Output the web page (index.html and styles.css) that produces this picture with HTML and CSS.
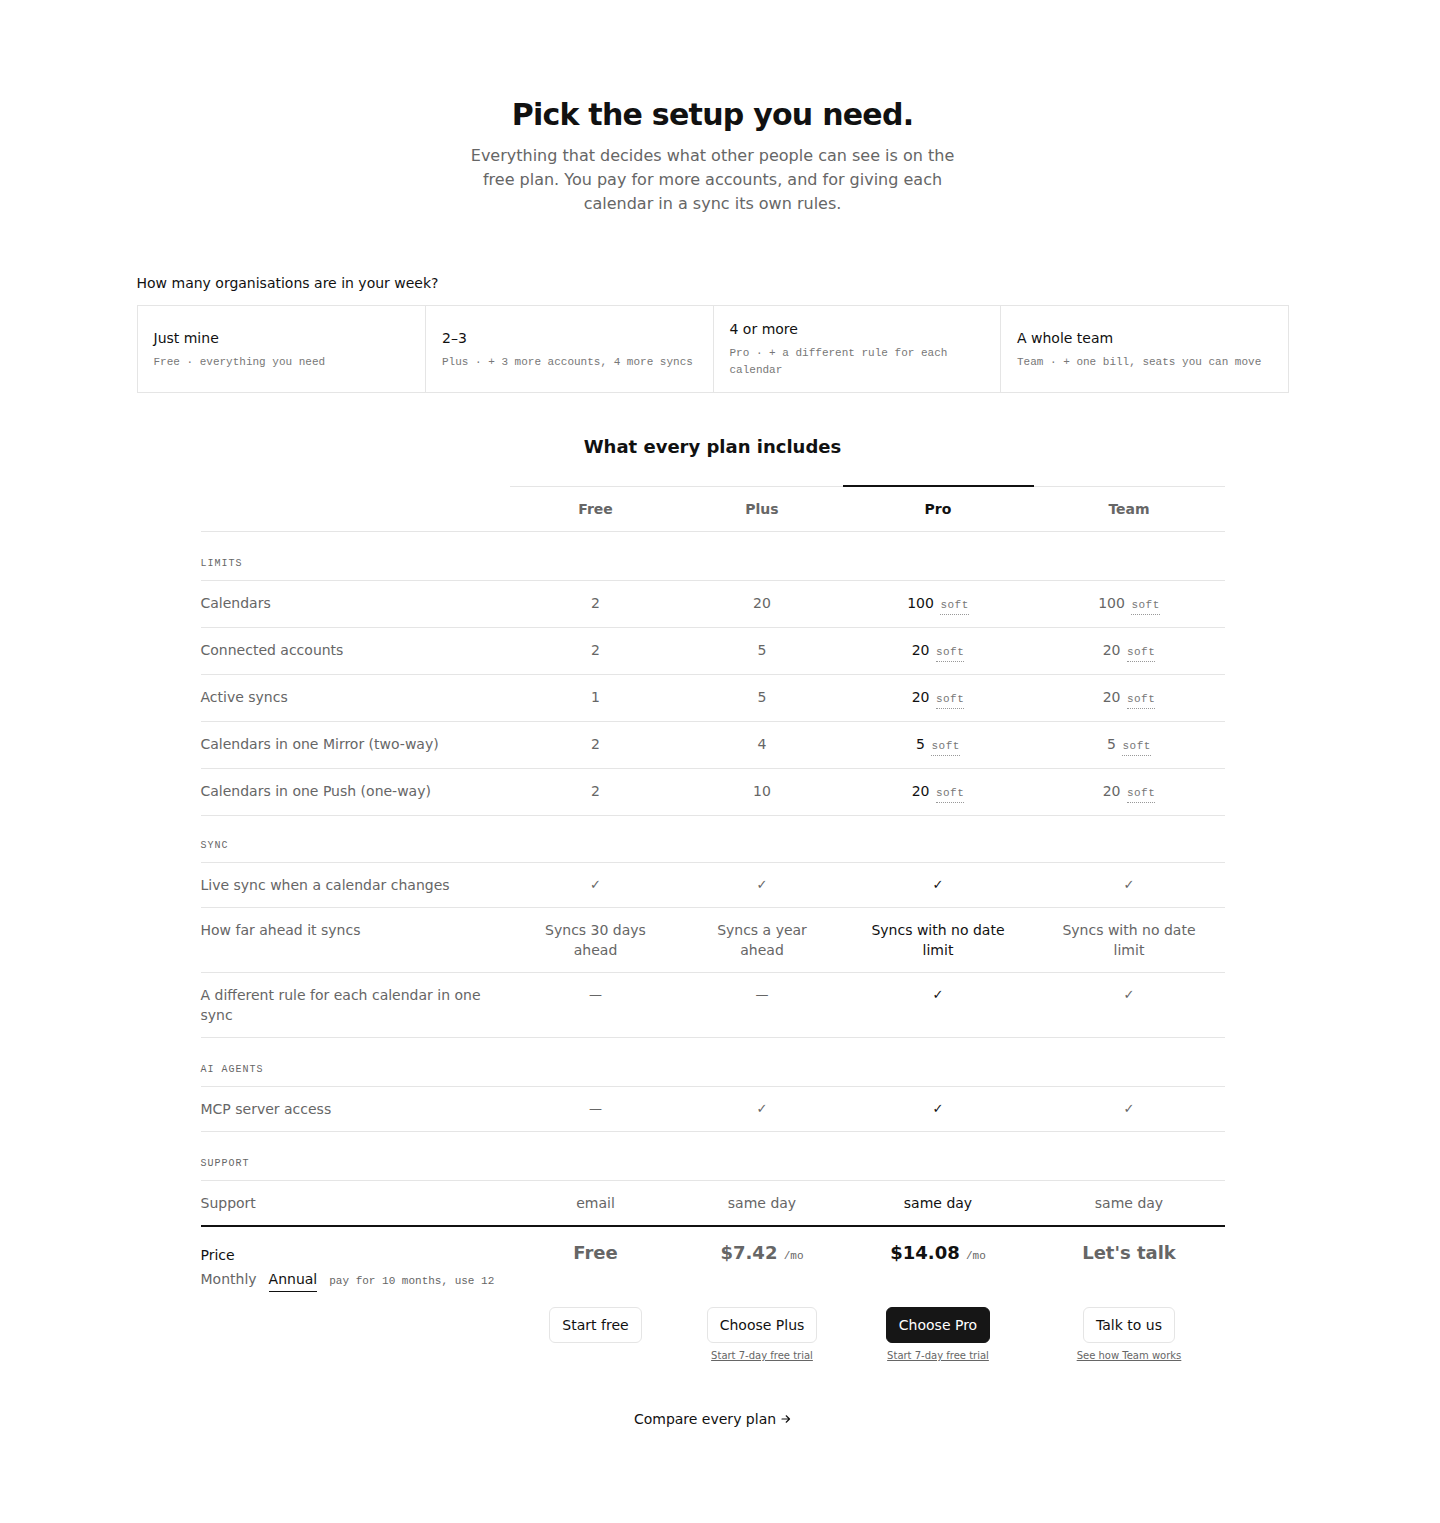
FILE: index.html
```html
<!DOCTYPE html>
<html lang="en">
<head>
<meta charset="utf-8">
<title>Pricing</title>
<link rel="stylesheet" href="styles.css">
</head>
<body>
<main class="page">
  <header class="hero">
    <h1 class="hero-title">Pick the setup you need.</h1>
    <p class="hero-sub">Everything that decides what other people can see is on the free plan. You pay for more accounts, and for giving each calendar in a sync its own rules.</p>
  </header>

  <section class="picker">
    <p class="picker-q">How many organisations are in your week?</p>
    <div class="picker-grid">
      <button class="pick">
        <span class="pick-title">Just mine</span>
        <span class="pick-sub">Free · everything you need</span>
      </button>
      <button class="pick">
        <span class="pick-title">2–3</span>
        <span class="pick-sub">Plus · + 3 more accounts, 4 more syncs</span>
      </button>
      <button class="pick">
        <span class="pick-title">4 or more</span>
        <span class="pick-sub">Pro · + a different rule for each calendar</span>
      </button>
      <button class="pick">
        <span class="pick-title">A whole team</span>
        <span class="pick-sub">Team · + one bill, seats you can move</span>
      </button>
    </div>
  </section>

  <section class="compare">
    <h2 class="compare-title">What every plan includes</h2>
    <div class="table">
      <div class="row head">
        <div class="cell label"></div>
        <div class="cell plan">Free</div>
        <div class="cell plan">Plus</div>
        <div class="cell plan pro">Pro</div>
        <div class="cell plan">Team</div>
      </div>

      <div class="row section"><div class="section-label">Limits</div></div>
      <div class="row">
        <div class="cell label">Calendars</div>
        <div class="cell">2</div>
        <div class="cell">20</div>
        <div class="cell pro">100 <span class="soft">soft</span></div>
        <div class="cell">100 <span class="soft">soft</span></div>
      </div>
      <div class="row">
        <div class="cell label">Connected accounts</div>
        <div class="cell">2</div>
        <div class="cell">5</div>
        <div class="cell pro">20 <span class="soft">soft</span></div>
        <div class="cell">20 <span class="soft">soft</span></div>
      </div>
      <div class="row">
        <div class="cell label">Active syncs</div>
        <div class="cell">1</div>
        <div class="cell">5</div>
        <div class="cell pro">20 <span class="soft">soft</span></div>
        <div class="cell">20 <span class="soft">soft</span></div>
      </div>
      <div class="row">
        <div class="cell label">Calendars in one Mirror (two-way)</div>
        <div class="cell">2</div>
        <div class="cell">4</div>
        <div class="cell pro">5 <span class="soft">soft</span></div>
        <div class="cell">5 <span class="soft">soft</span></div>
      </div>
      <div class="row">
        <div class="cell label">Calendars in one Push (one-way)</div>
        <div class="cell">2</div>
        <div class="cell">10</div>
        <div class="cell pro">20 <span class="soft">soft</span></div>
        <div class="cell">20 <span class="soft">soft</span></div>
      </div>

      <div class="row section sync"><div class="section-label">Sync</div></div>
      <div class="row">
        <div class="cell label">Live sync when a calendar changes</div>
        <div class="cell mark">✓</div>
        <div class="cell mark">✓</div>
        <div class="cell mark pro">✓</div>
        <div class="cell mark">✓</div>
      </div>
      <div class="row">
        <div class="cell label">How far ahead it syncs</div>
        <div class="cell">Syncs 30 days ahead</div>
        <div class="cell">Syncs a year ahead</div>
        <div class="cell pro">Syncs with no date limit</div>
        <div class="cell">Syncs with no date limit</div>
      </div>
      <div class="row">
        <div class="cell label">A different rule for each calendar in one sync</div>
        <div class="cell mark">—</div>
        <div class="cell mark">—</div>
        <div class="cell mark pro">✓</div>
        <div class="cell mark">✓</div>
      </div>

      <div class="row section"><div class="section-label">AI agents</div></div>
      <div class="row">
        <div class="cell label">MCP server access</div>
        <div class="cell mark">—</div>
        <div class="cell mark">✓</div>
        <div class="cell mark pro">✓</div>
        <div class="cell mark">✓</div>
      </div>

      <div class="row section"><div class="section-label">Support</div></div>
      <div class="row last">
        <div class="cell label">Support</div>
        <div class="cell">email</div>
        <div class="cell">same day</div>
        <div class="cell pro">same day</div>
        <div class="cell">same day</div>
      </div>

      <div class="row price-row">
        <div class="cell label price-label">
          <span class="price-title">Price</span>
          <div class="billing">
            <button class="bill">Monthly</button>
            <button class="bill active">Annual</button>
            <span class="bill-note">pay for 10 months, use 12</span>
          </div>
        </div>
        <div class="cell price">Free</div>
        <div class="cell price">$7.42 <span class="per">/mo</span></div>
        <div class="cell price pro">$14.08 <span class="per">/mo</span></div>
        <div class="cell price">Let's talk</div>
      </div>

      <div class="row cta-row">
        <div class="cell label"></div>
        <div class="cell cta"><button class="btn">Start free</button></div>
        <div class="cell cta"><button class="btn">Choose Plus</button><a class="cta-link" href="#">Start 7-day free trial</a></div>
        <div class="cell cta"><button class="btn btn-dark">Choose Pro</button><a class="cta-link" href="#">Start 7-day free trial</a></div>
        <div class="cell cta"><button class="btn">Talk to us</button><a class="cta-link" href="#">See how Team works</a></div>
      </div>
    </div>

    <a class="compare-all" href="#">Compare every plan <svg class="arrow" width="10" height="10" viewBox="0 0 10 10" aria-hidden="true"><path d="M1 5h7.5M5.2 1.8 8.5 5l-3.3 3.2" fill="none" stroke="currentColor" stroke-width="1.2" stroke-linecap="round" stroke-linejoin="round"/></svg></a>
  </section>
</main>
</body>
</html>
```

FILE: styles.css
```css
* { box-sizing: border-box; }

body {
  margin: 0;
  background: #fff;
  color: #111;
  font-family: "DejaVu Sans", sans-serif;
  font-size: 14px;
  line-height: 20px;
}

/* the right padding stands in for the reference's scrollbar gutter */
.page {
  padding: 97px 15px 80px 0;
}

/* Hero */
.hero {
  text-align: center;
}
.hero-title {
  margin: 0;
  font-size: 30px;
  line-height: 36px;
  font-weight: 700;
  letter-spacing: -0.025em;
  color: #111;
}
.hero-sub {
  margin: 11px auto 0;
  max-width: 500px;
  font-size: 16px;
  line-height: 24px;
  color: #666;
}

/* Picker */
.picker {
  width: 1152px;
  margin: 57px auto 0;
}
.picker-q {
  margin: 0 0 12px;
  font-size: 14px;
  line-height: 20px;
  color: #111;
}
.picker-grid {
  display: grid;
  grid-template-columns: repeat(4, 1fr);
  border: 1px solid #e5e5e5;
}
.pick {
  display: flex;
  flex-direction: column;
  justify-content: center;
  gap: 7px;
  padding: 15px 16px 13px;
  background: #fff;
  border: 0;
  border-left: 1px solid #e5e5e5;
  text-align: left;
  font-family: "DejaVu Sans", sans-serif;
  cursor: pointer;
}
.pick:first-child { border-left: 0; }
.pick-title {
  font-size: 14px;
  line-height: 17px;
  color: #111;
}
.pick-sub {
  font-family: "Liberation Mono", monospace;
  font-size: 11px;
  line-height: 17px;
  color: #777;
}

/* Compare */
.compare {
  margin-top: 40px;
  text-align: center;
}
.compare-title {
  margin: 0 0 25px;
  font-size: 18px;
  line-height: 28px;
  font-weight: 700;
  color: #111;
}

.table {
  width: 1024px;
  margin: 0 auto;
  text-align: left;
}
.row {
  display: grid;
  grid-template-columns: 309px 172px 161px 191px 191px;
  border-bottom: 1px solid #e5e5e5;
}
.cell {
  padding: 12px 16px;
  text-align: center;
  color: #666;
}
.cell.pro { color: #111; }
.cell.label {
  padding-left: 0;
  text-align: left;
  color: #666;
}

.row.head .plan {
  font-weight: 700;
  border-top: 1px solid #e5e5e5;
}
.row.head .plan.pro {
  border-top: 2px solid #111;
  margin-top: -1px;
}

.row.section {
  display: block;
  padding: 24px 0 8px;
}
.row.section.sync { padding-top: 22px; }
.section-label {
  font-family: "Liberation Mono", monospace;
  font-size: 10px;
  line-height: 16px;
  letter-spacing: 1px;
  text-transform: uppercase;
  color: #666;
}

.soft {
  display: inline-block;
  margin-left: 2px;
  padding-bottom: 2px;
  font-family: "Liberation Mono", monospace;
  font-size: 11px;
  line-height: 13px;
  letter-spacing: 0.5px;
  color: #777;
  border-bottom: 1px dotted #999;
}

.mark { font-size: 13px; }

.row.last {
  border-bottom: 2px solid #111;
}

/* Price */
.price-row { border-bottom: 0; }
.price-label {
  padding-top: 18px;
  padding-bottom: 8px;
  padding-right: 0;
}
.price-title {
  display: block;
  color: #111;
}
.billing {
  display: flex;
  flex-wrap: nowrap;
  align-items: baseline;
  gap: 12px;
  margin-top: 4px;
}
.bill {
  padding: 0 0 2px;
  border: 0;
  border-bottom: 1px solid transparent;
  background: none;
  font-family: "DejaVu Sans", sans-serif;
  font-size: 14px;
  line-height: 20px;
  color: #666;
  cursor: pointer;
}
.bill.active {
  color: #111;
  border-bottom-color: #111;
}
.bill-note {
  white-space: nowrap;
  font-family: "Liberation Mono", monospace;
  font-size: 11px;
  color: #666;
}
.price {
  padding-top: 14px;
  font-size: 18px;
  line-height: 24px;
  font-weight: 700;
}
.per {
  font-family: "Liberation Mono", monospace;
  font-size: 11px;
  font-weight: 400;
  color: #666;
}

.cta-row { border-bottom: 0; }
.cta {
  display: flex;
  flex-direction: column;
  align-items: center;
  gap: 5px;
  padding-top: 7px;
}
.btn {
  height: 36px;
  padding: 0 12px;
  border: 1px solid #e5e5e5;
  border-radius: 6px;
  background: #fff;
  font-family: "DejaVu Sans", sans-serif;
  font-size: 14px;
  color: #111;
  cursor: pointer;
}
.btn-dark {
  background: #161616;
  border-color: #161616;
  color: #fff;
}
.cta-link {
  font-size: 10px;
  line-height: 16px;
  color: #666;
  text-decoration: underline;
}

.compare-all {
  display: inline-flex;
  align-items: center;
  gap: 5px;
  margin-top: 33px;
  font-size: 14px;
  line-height: 20px;
  color: #111;
  text-decoration: none;
}
.arrow { display: block; }
```
